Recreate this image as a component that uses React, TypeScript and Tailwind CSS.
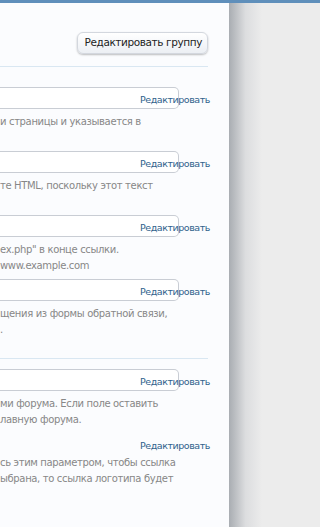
import React from 'react';

type Row = {
    box: boolean;
    help: string[];
};

const rows: Row[] = [
    { box: true, help: ['и страницы и указывается в', ''] },
    { box: true, help: ['те HTML, поскольку этот текст', ''] },
    { box: true, help: ['ex.php" в конце ссылки.', 'www.example.com'] },
    { box: true, help: ['щения из формы обратной связи,', '.'] },
];

const rows2: Row[] = [
    { box: true, help: ['ми форума. Если поле оставить', 'лавную форума.'] },
    { box: false, help: ['сь этим параметром, чтобы ссылка', 'ыбрана, то ссылка логотипа будет'] },
];

const OptionRow: React.FC<{ row: Row }> = ({ row }) => (
    <div className="mb-[5px]">
        <div className="flex h-[22px] items-center">
            {row.box ? (
                <div className="h-[22px] w-[179px] shrink-0 rounded-r-[5px] border border-l-0 border-[#c9cdd4] bg-white" />
            ) : (
                <div className="h-[22px] w-[179px] shrink-0" />
            )}
            <a className="-ml-[39px] mt-[3px] whitespace-nowrap text-[9.5px] leading-4 tracking-[-0.45px] text-[#2f628c]">
                Редактировать
            </a>
        </div>
        <div
            className={
                row.box
                    ? 'mt-[5px] whitespace-nowrap text-[10px] leading-4 tracking-[-0.35px] text-[#878787]'
                    : 'mt-0 whitespace-nowrap text-[10px] leading-4 tracking-[-0.35px] text-[#878787]'
            }
        >
            {row.help.map((line, i) => (
                <div key={i} className="h-4">{line}</div>
            ))}
        </div>
    </div>
);

const App: React.FC = () => {
    return (
        <div className="flex h-[527px] w-full flex-col overflow-hidden bg-[#ececec] font-['DejaVu_Sans',sans-serif]">
            <div className="h-[3px] shrink-0 bg-[#5f8fbb]" />
            <div className="flex flex-1">
                {/* Панель настроек */}
                <div className="w-[229px] shrink-0 bg-[#fbfcfe] pr-[21px] pt-[29px]">
                    <div className="flex justify-end">
                        <button className="h-[22px] rounded-[6px] border border-[#d3d7de] bg-gradient-to-b from-white to-[#eceff4] pl-[7px] pr-[5px] text-[10.5px] tracking-[-0.4px] text-[#222] shadow-[0_1px_2px_rgba(0,0,0,0.25)]">
                            Редактировать группу
                        </button>
                    </div>
                    <div className="mt-[12px] h-px bg-[#d9e7f2]" />
                    <div className="pt-[20px]">
                        {rows.map((r, i) => (
                            <OptionRow key={i} row={r} />
                        ))}
                    </div>
                    <div className="mt-[20px] h-px bg-[#d9e7f2]" />
                    <div className="pt-[10px]">
                        {rows2.map((r, i) => (
                            <OptionRow key={i} row={r} />
                        ))}
                    </div>
                </div>
                {/* Тень справа */}
                <div className="w-[33px] shrink-0 bg-gradient-to-r from-[#a9adb2] via-[#dcdddf] to-[#ececec]" />
                <div className="flex-1" />
            </div>
        </div>
    );
};

export default App;
